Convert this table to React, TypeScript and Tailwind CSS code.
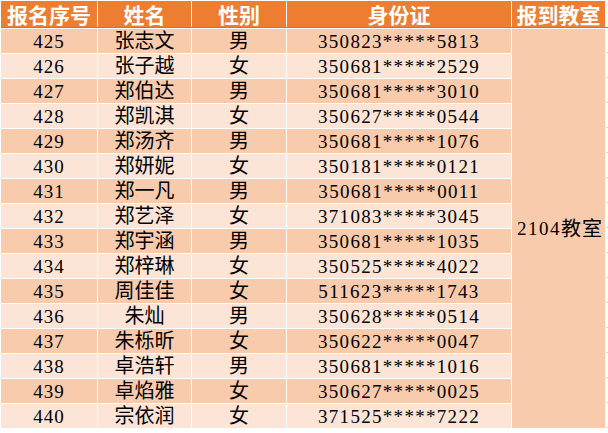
import React from 'react';

const rows: [string, string, string, string][] = [
  ['425', '张志文', '男', '350823*****5813'],
  ['426', '张子越', '女', '350681*****2529'],
  ['427', '郑伯达', '男', '350681*****3010'],
  ['428', '郑凯淇', '女', '350627*****0544'],
  ['429', '郑汤齐', '男', '350681*****1076'],
  ['430', '郑妍妮', '女', '350181*****0121'],
  ['431', '郑一凡', '男', '350681*****0011'],
  ['432', '郑艺泽', '女', '371083*****3045'],
  ['433', '郑宇涵', '男', '350681*****1035'],
  ['434', '郑梓琳', '女', '350525*****4022'],
  ['435', '周佳佳', '女', '511623*****1743'],
  ['436', '朱灿', '男', '350628*****0514'],
  ['437', '朱栎昕', '女', '350622*****0047'],
  ['438', '卓浩轩', '男', '350681*****1016'],
  ['439', '卓焰雅', '女', '350627*****0025'],
  ['440', '宗依润', '女', '371525*****7222'],
];

const headers = ['报名序号', '姓名', '性别', '身份证', '报到教室'];

const cols = 'grid-cols-[96px_93px_94px_224px_93px_3px]';

const App = () => {
  return (
    <div className="w-[608px] h-[433px] bg-white overflow-hidden pl-px pt-px font-['Liberation_Serif','Noto_Sans_CJK_SC',serif] text-black">
      {/* header */}
      <div className={`grid ${cols} gap-x-px h-[27px] border-b border-[#2eb67d] w-fit`}>
        {headers.map((h) => (
          <div
            key={h}
            className="bg-[#ed7d31] flex items-center justify-center text-white font-bold text-[21px] leading-none font-['Noto_Sans_CJK_SC',sans-serif]"
          >
            {h}
          </div>
        ))}
        <div className="bg-white" />
      </div>

      {/* body */}
      <div className={`grid ${cols} grid-rows-[repeat(16,24px)] gap-px pt-px w-fit`}>
        {rows.map((r, i) => {
          const bg = i % 2 === 0 ? 'bg-[#f8cbad]' : 'bg-[#fce4d6]';
          return (
            <React.Fragment key={r[0]}>
              <div
                className={`${bg} flex items-center justify-center text-[19px] tracking-[1px] leading-none`}
                style={{ gridRow: i + 1, gridColumn: 1 }}
              >
                {r[0]}
              </div>
              <div
                className={`${bg} flex items-center justify-center text-[20px] leading-none`}
                style={{ gridRow: i + 1, gridColumn: 2 }}
              >
                {r[1]}
              </div>
              <div
                className={`${bg} flex items-center justify-center text-[20px] leading-none`}
                style={{ gridRow: i + 1, gridColumn: 3 }}
              >
                {r[2]}
              </div>
              <div
                className={`${bg} flex items-center justify-center text-[19px] tracking-[1.3px] leading-none`}
                style={{ gridRow: i + 1, gridColumn: 4 }}
              >
                {r[3]}
              </div>
              <div
                className="bg-white border-b border-[#d9d9d9]"
                style={{ gridRow: i + 1, gridColumn: 6 }}
              />
            </React.Fragment>
          );
        })}
        <div className="bg-[#f8cbad] col-start-5 row-start-1 row-span-16 flex items-center pl-[5px] text-[20px] leading-none whitespace-nowrap">
          <span className="text-[19px] tracking-[1.5px]">2104</span>
          <span className="tracking-[1px]">教室</span>
        </div>
      </div>
    </div>
  );
};

export default App;
